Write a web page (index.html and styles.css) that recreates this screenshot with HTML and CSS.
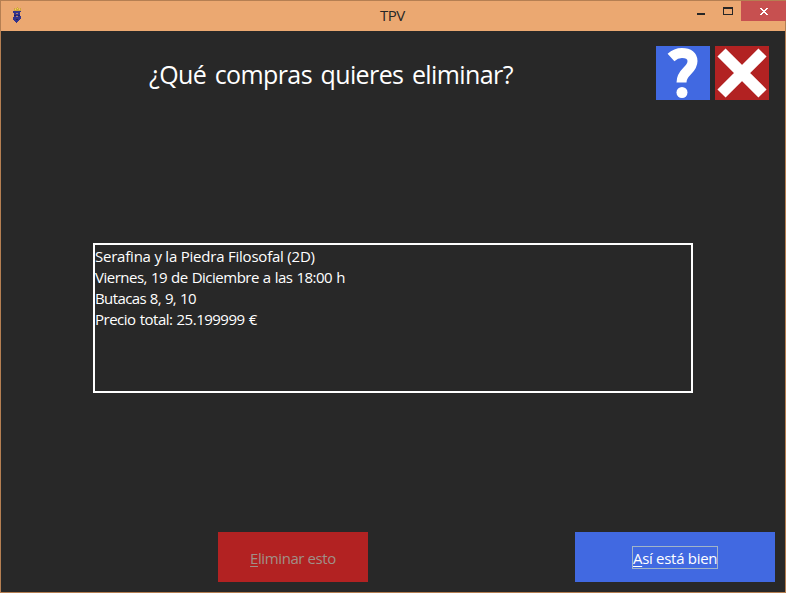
FILE: index.html
```
<!DOCTYPE html>
<html lang="es">
<head>
<meta charset="utf-8">
<title>TPV</title>
<link rel="stylesheet" href="styles.css">
</head>
<body>
<div class="window">
  <header class="titlebar">
    <svg class="app-icon" width="10" height="16" viewBox="0 0 10 16" shape-rendering="crispEdges">
      <path fill="#d0a53c" d="M1 1h1v1h1v-1h1v-1h1v1h1v1h1v-1h1v3h-7z"/>
      <path fill="#f0dc50" d="M2 2h1v1h-1zM4 1h1v1h-1zM6 2h1v1h-1z"/>
      <path fill="#34348c" d="M0 4h8v1h-1v4h1v3h-1v1h-1v1h-1v1h-1v1h-1v-1h-1v-1h-1v-1h-1v-3h1v-4h-1z"/>
      <path fill="#b08070" d="M3 6h2v1h-2zM3 9h2v1h-2z"/>
      <path fill="#20205e" d="M1 8h2v1h-2zM5 8h2v1h-2zM3 12h2v1h-2z"/>
    </svg>
    <span class="caption">TPV</span>
    <div class="controls">
      <svg width="86" height="20" viewBox="0 0 86 20" shape-rendering="crispEdges">
        <rect x="41" width="45" height="20" fill="#c75050"/>
        <rect x="-3" y="12" width="8" height="2" fill="#262626"/>
        <path fill="#262626" fill-rule="evenodd" d="M23 6h10v8h-10zM24 8v5h8v-5z"/>
        <path fill="#fff" d="M60 7h2v1h1v1h2v-1h1v-1h2v1h-1v1h-1v1h-1v1h1v1h1v1h1v1h-2v-1h-1v-1h-2v1h-1v1h-2v-1h1v-1h1v-1h1v-1h-1v-1h-1v-1h-1z"/>
      </svg>
    </div>
  </header>
  <main class="content">
    <div class="top">
      <h1>¿Qué compras quieres eliminar?</h1>
      <div class="tools">
        <button class="tile help" aria-label="Ayuda"><svg width="54" height="54" viewBox="0 0 54 54"><path fill="none" stroke="#fff" stroke-width="10" d="M15 11.500C19 7.800 22 7 26 7C33 7 36.500 10 36.500 15C36.500 25 25.500 25 25.500 36.500"/><circle cx="26" cy="46.500" r="5.500" fill="#fff"/></svg></button>
        <button class="tile close" aria-label="Cerrar"><svg width="54" height="54" viewBox="0 0 54 54"><path stroke="#fff" stroke-width="11.500" d="M6.500 6.500L47.500 47.500M47.500 6.500L6.500 47.500"/></svg></button>
      </div>
    </div>
    <div class="list">
      <div class="l1">Serafina y la Piedra Filosofal (2D)</div>
      <div class="l2">Viernes, 19 de Diciembre a las 18:00 h</div>
      <div class="l3">Butacas 8, 9, 10</div>
      <div class="l4">Precio total: 25.199999 €</div>
    </div>
    <footer class="actions">
      <button class="remove" disabled><span><u>E</u>liminar esto</span></button>
      <button class="accept"><span><u>A</u>sí está bien</span></button>
    </footer>
  </main>
</div>
</body>
</html>
```
FILE: styles.css
```
* { box-sizing: border-box; }
body { margin: 0; font: 15px/21px "Open Sans", "Noto Sans", sans-serif; color: #fff; }
.window { width: 786px; height: 593px; border: 1px solid #b57f52; background: #282828; display: flex; flex-direction: column; }
.titlebar { height: 30px; flex: none; background: #eba871; display: flex; }
.app-icon { margin: 6px 0 0 12px; flex: none; }
.caption { margin: 4px 0 0 357px; width: 40px; color: #262626; letter-spacing: -0.5px; }
.controls { margin: 0 -1px 0 auto; }
.controls svg { display: block; overflow: visible; }
.content { flex: 1; display: flex; flex-direction: column; }
.top { display: flex; justify-content: space-between; padding: 15px 16px 0 148px; height: 212px; }
h1 { margin: 10px 0 0; font-size: 25px; line-height: 36px; font-weight: 400; white-space: nowrap; letter-spacing: -0.6px; word-spacing: 2.6px; }
.tools { display: flex; gap: 5px; }
button { border: 0; padding: 0; margin: 0; font: inherit; color: #fff; }
.tile { width: 54px; height: 54px; }
.tile svg { display: block; }
.help { background: #4169e1; }
.close { background: #b22222; }
.list { width: 600px; height: 150px; margin-left: 92px; border: 2px solid #fff; padding-top: 1px; white-space: nowrap; }
.l1 { letter-spacing: -0.22px; }
.l2 { letter-spacing: -0.5px; word-spacing: 0.6px; }
.l3 { letter-spacing: -0.6px; word-spacing: 0.5px; }
.l4 { letter-spacing: -0.5px; word-spacing: 0.7px; }
.actions { display: flex; justify-content: space-between; margin: 139px 10px 0 217px; }
.actions button { height: 50px; letter-spacing: -0.4px; padding-top: 1px; }
.remove { width: 150px; background: #b22222; color: #a09088; }
.accept { width: 200px; background: #4169e1; }
.actions span { display: inline-block; height: 23px; line-height: 23px; border: 1px solid transparent; white-space: nowrap; }
.accept span { width: 86px; border-color: #a0b4c8; letter-spacing: -0.3px; }
u { text-underline-offset: 2px; text-decoration-thickness: 1px; }
```
